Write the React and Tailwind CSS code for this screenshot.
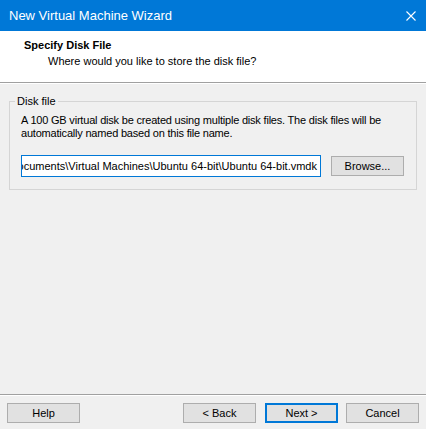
import React from "react";

const font = { fontFamily: '"Liberation Sans", Arial, sans-serif' };

function WinButton({ children, focused, className = "" }) {
  return (
    <button
      className={
        "h-[20px] w-[73px] text-[11px] text-black bg-[#e1e1e1] flex items-center justify-center " +
        (focused ? "border-2 border-[#0078d7]" : "border border-[#adadad]") +
        " " +
        className
      }
    >
      {children}
    </button>
  );
}

export default function App() {
  return (
    <div
      className="w-[426px] h-[429px] bg-[#f0f0f0] flex flex-col overflow-hidden"
      style={font}
    >
      {/* Title bar */}
      <div className="h-[31px] bg-[#0078d7] flex items-center justify-between pl-[9px] pr-[10px] shrink-0">
        <span className="text-white text-[13px]">New Virtual Machine Wizard</span>
        <svg width="10" height="10" viewBox="0 0 10 10">
          <path d="M0.5 0.5L9.5 9.5M9.5 0.5L0.5 9.5" stroke="#fff" strokeWidth="1.1" />
        </svg>
      </div>

      {/* Header */}
      <div className="h-[52px] bg-white border-b border-[#a0a0a0] shrink-0 pt-[7px]">
        <div className="pl-[24px] text-[11px] font-bold text-black leading-[14px]">
          Specify Disk File
        </div>
        <div className="pl-[48px] text-[11px] text-black leading-[14px] mt-[2px]">
          Where would you like to store the disk file?
        </div>
      </div>
      <div className="h-px bg-white shrink-0" />

      {/* Content */}
      <div className="flex-1 px-[9px] pt-[11px]">
        <fieldset className="border border-[#d5d5d5] w-[408px] pl-[11px] pr-[11px] pb-[12px]">
          <legend className="ml-[-6px] px-[2px] text-[11px] leading-[13px] text-black">
            Disk file
          </legend>
          <p className="text-[11px] leading-[13px] text-black mt-[6px] tracking-[-0.2px]">
            A 100 GB virtual disk be created using multiple disk files. The disk files will be automatically named based on this file name.
          </p>
          <div className="flex items-center mt-[15px]">
            <div className="w-[300px] h-[22px] border border-[#0078d7] bg-white overflow-hidden flex justify-end items-center pr-[3px]">
              <span className="whitespace-nowrap text-[11px] text-black">
                C:\Users\user\Documents\Virtual Machines\Ubuntu 64-bit\Ubuntu 64-bit.vmdk
              </span>
            </div>
            <WinButton className="ml-[10px]">Browse...</WinButton>
          </div>
        </fieldset>
      </div>

      {/* Footer */}
      <div className="h-px bg-[#a0a0a0] shrink-0" />
      <div className="h-px bg-white shrink-0" />
      <div className="h-[33px] flex items-start pt-[7px] pl-[7px] shrink-0">
        <WinButton>Help</WinButton>
        <div className="flex-1" />
        <WinButton>&lt; Back</WinButton>
        <WinButton focused className="ml-[9px]">Next &gt;</WinButton>
        <WinButton className="ml-[8px] mr-[7px]">Cancel</WinButton>
      </div>
    </div>
  );
}
